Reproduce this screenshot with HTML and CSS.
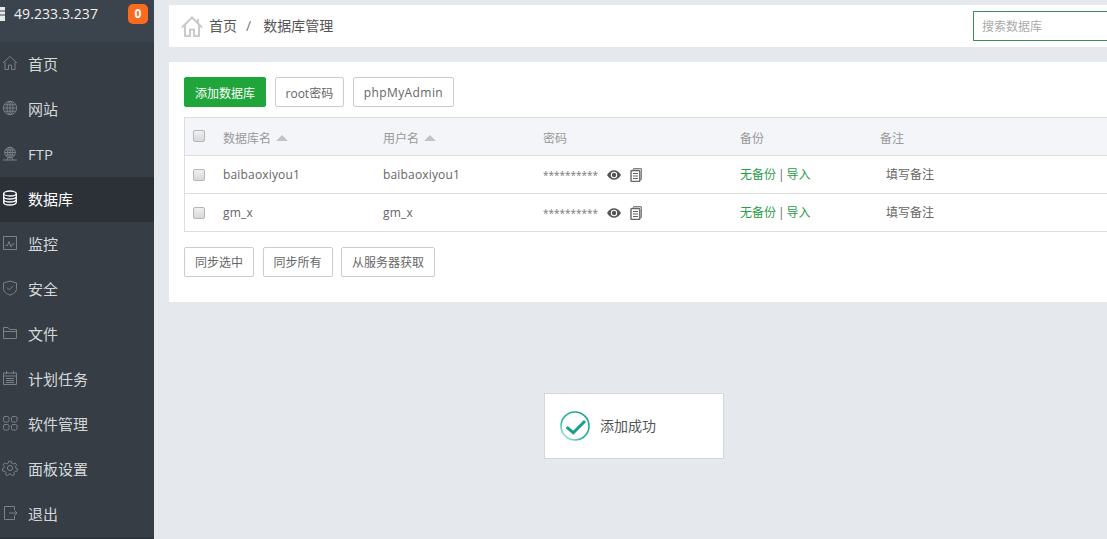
FILE: index.html
```html
<!DOCTYPE html>
<html lang="zh-CN">
<head>
<meta charset="utf-8">
<title>数据库管理</title>
<link rel="stylesheet" href="styles.css">
</head>
<body>
<div class="app">
  <aside class="sidebar">
    <div class="server">
      <svg class="server-icon" width="6" height="14" viewBox="0 0 6 14"><path d="M0 0h5v14H0z" fill="#e8eaec"/><path d="M0 4h5M0 8h5" stroke="#3b434c" stroke-width="1.2"/></svg>
      <span class="ip">49.233.3.237</span>
      <span class="badge">0</span>
    </div>
    <nav class="menu">
      <a class="item"><svg class="ico" viewBox="0 0 16 16"><path d="M1 8l7-6.500L15 8M3 7v7.500h3.500V10h3v4.500H13V7"/></svg>首页</a>
      <a class="item"><svg class="ico" viewBox="0 0 16 16"><circle cx="8" cy="8" r="6.700"/><ellipse cx="8" cy="8" rx="3" ry="6.700"/><path d="M1.300 8h13.400M2.200 4.800h11.600M2.200 11.200h11.600M8 1.300v13.400"/></svg>网站</a>
      <a class="item item-latin"><svg class="ico" viewBox="0 0 16 16"><circle cx="8" cy="6.500" r="5.300"/><ellipse cx="8" cy="6.500" rx="2.400" ry="5.300"/><path d="M2.700 6.500h10.600M3.500 4h9M3.500 9h9M8 1.200v10.600M1 14h14M5 14l1-2M11 14l-1-2"/></svg>FTP</a>
      <a class="item active"><svg class="ico" viewBox="0 0 16 16"><ellipse cx="8" cy="3.500" rx="6.300" ry="2.500"/><path d="M1.700 3.500v9c0 1.400 2.800 2.500 6.300 2.500s6.300-1.100 6.300-2.500v-9M1.700 6.500c0 1.400 2.800 2.500 6.300 2.500s6.300-1.100 6.300-2.500M1.700 9.500c0 1.400 2.800 2.500 6.300 2.500s6.300-1.100 6.300-2.500"/></svg>数据库</a>
      <a class="item"><svg class="ico" viewBox="0 0 16 16"><path d="M1.500 1.500h13v13h-13zM3.500 10.500h2l1.500-4 2 5.500 1.500-3h2"/></svg>监控</a>
      <a class="item"><svg class="ico" viewBox="0 0 16 16"><path d="M8 1l6.500 2v5.500c0 3.500-3 5.500-6.500 6.500-3.500-1-6.500-3-6.500-6.500V3zM5 7.500l2.300 2.300L11.200 6"/></svg>安全</a>
      <a class="item"><svg class="ico" viewBox="0 0 16 16"><path d="M1.500 13.500v-11h4.500l1.500 2h7v9zM1.500 6.500h13"/></svg>文件</a>
      <a class="item"><svg class="ico" viewBox="0 0 16 16"><path d="M1.500 3h13v11.500h-13zM1.500 6h13M4.500 1v3M11.500 1v3M4 8.500h8M4 10.500h8M4 12.500h8"/></svg>计划任务</a>
      <a class="item"><svg class="ico" viewBox="0 0 16 16"><rect x="1.500" y="1.500" width="5.500" height="5.500" rx="1.500"/><rect x="9.500" y="1.500" width="5.500" height="5.500" rx="1.500"/><rect x="1.500" y="9.500" width="5.500" height="5.500" rx="1.500"/><rect x="9.500" y="9.500" width="5.500" height="5.500" rx="1.500"/></svg>软件管理</a>
      <a class="item"><svg class="ico" viewBox="0 0 16 16"><path d="M6.800 1.200h2.400l.4 2 1.700.8 1.900-1 1.500 1.900-1.300 1.500.4 1.600 1.800.9-.5 2.300-2 .1-1.200 1.400.4 2-2.200 1-1.200-1.600H7l-1.200 1.600-2.200-1 .4-2L2.800 11.200l-2-.1-.5-2.300 1.800-.9.400-1.600L1.200 4.800l1.500-1.900 1.900 1 1.700-.8z"/><circle cx="8" cy="8" r="2.600"/></svg>面板设置</a>
      <a class="item"><svg class="ico" viewBox="0 0 16 16"><path d="M12.500 5V1.500h-10v13h10V11M7 8h8M12.500 5.500L15 8l-2.500 2.500"/></svg>退出</a>
    </nav>
  </aside>
  <main class="main">
    <header class="crumbs">
      <svg class="home" width="22" height="21" viewBox="0 0 22 21"><path d="M1 11.500L11 1.500l10 10M17 3v4.500M4 9.500V20h5v-6.500h4V20h5V9.500"/></svg>
      <span class="crumb">首页</span>
      <span class="sep">/</span>
      <span class="crumb">数据库管理</span>
      <input class="search" type="text" placeholder="搜索数据库">
    </header>
    <section class="card">
      <div class="toolbar">
        <button class="btn primary">添加数据库</button>
        <button class="btn">root密码</button>
        <button class="btn wide">phpMyAdmin</button>
      </div>
      <div class="table">
        <div class="row head">
          <span class="c-check"><span class="box"></span></span>
          <span class="c-name">数据库名<i class="tri"></i></span>
          <span class="c-user">用户名<i class="tri"></i></span>
          <span class="c-pass">密码</span>
          <span class="c-backup">备份</span>
          <span class="c-note">备注</span>
        </div>
        <div class="row">
          <span class="c-check"><span class="box"></span></span>
          <span class="c-name latin">baibaoxiyou1</span>
          <span class="c-user latin">baibaoxiyou1</span>
          <span class="c-pass"><span class="stars">**********</span>
            <svg class="eye" width="14" height="10" viewBox="0 0 14 10"><path d="M0 5c1.800-3.200 4.200-4.800 7-4.800s5.200 1.600 7 4.800c-1.800 3.200-4.200 4.800-7 4.800S1.800 8.200 0 5z" fill="#555"/><circle cx="7" cy="5" r="3.200" fill="#fff"/><circle cx="7" cy="5" r="2.200" fill="#555"/></svg>
            <svg class="copy" width="12" height="14" viewBox="0 0 12 14"><path d="M3.500 1.500V.7h7.800v10.800h-1" fill="none" stroke="#666"/><rect x="1" y="2.500" width="8.800" height="11" rx="1" fill="#fff" stroke="#666" stroke-width="1.400"/><path d="M3 5.500h5M3 8h5M3 10.500h5" stroke="#666"/></svg>
          </span>
          <span class="c-backup raised"><a class="link">无备份</a><span class="pipe">|</span><a class="link">导入</a></span>
          <span class="c-note note raised">填写备注</span>
        </div>
        <div class="row">
          <span class="c-check"><span class="box"></span></span>
          <span class="c-name latin">gm_x</span>
          <span class="c-user latin">gm_x</span>
          <span class="c-pass"><span class="stars">**********</span>
            <svg class="eye" width="14" height="10" viewBox="0 0 14 10"><path d="M0 5c1.800-3.200 4.200-4.800 7-4.800s5.200 1.600 7 4.800c-1.800 3.200-4.200 4.800-7 4.800S1.800 8.200 0 5z" fill="#555"/><circle cx="7" cy="5" r="3.200" fill="#fff"/><circle cx="7" cy="5" r="2.200" fill="#555"/></svg>
            <svg class="copy" width="12" height="14" viewBox="0 0 12 14"><path d="M3.500 1.500V.7h7.800v10.800h-1" fill="none" stroke="#666"/><rect x="1" y="2.500" width="8.800" height="11" rx="1" fill="#fff" stroke="#666" stroke-width="1.400"/><path d="M3 5.500h5M3 8h5M3 10.500h5" stroke="#666"/></svg>
          </span>
          <span class="c-backup raised"><a class="link">无备份</a><span class="pipe">|</span><a class="link">导入</a></span>
          <span class="c-note note raised">填写备注</span>
        </div>
      </div>
      <div class="actions">
        <button class="btn">同步选中</button>
        <button class="btn">同步所有</button>
        <button class="btn">从服务器获取</button>
      </div>
    </section>
  </main>
</div>
<div class="toast">
  <svg width="30" height="30" viewBox="0 0 30 30"><defs><linearGradient id="ring" x1="1" y1="0" x2="0" y2="1"><stop offset="0" stop-color="#16a085"/><stop offset=".65" stop-color="#2bb8a0"/><stop offset="1" stop-color="#d8f2ec"/></linearGradient></defs><circle cx="15" cy="15" r="14" fill="none" stroke="url(#ring)" stroke-width="1.600"/><path d="M6.700 16.200l6.600 5.500L25 10" fill="none" stroke="#16a085" stroke-width="3"/></svg>
  <span class="toast-text">添加成功</span>
</div>
</body>
</html>
```
FILE: styles.css
```css
* { box-sizing: border-box; }
html, body { margin: 0; height: 100%; overflow: hidden; }
body {
  background: #e5e8ec;
  font-family: "Open Sans", "Noto Sans CJK SC", sans-serif;
  font-size: 12px;
  color: #666;
}
.app { display: flex; height: 539px; width: 1107px; overflow: hidden; }
.sidebar { flex: 0 0 154px; background: #2f353c; display: flex; flex-direction: column; }
.server {
  height: 42px;
  background: #3b434c;
  display: flex;
  align-items: center;
  padding: 0 6px 14px 0;
  color: #f0f1f2;
}
.server-icon { margin-right: 8px; }
.ip { font-size: 14px; flex: 1; letter-spacing: .08px; padding-bottom: 1px; }
.badge {
  width: 20px;
  height: 20px;
  border-radius: 5px;
  background: #f96b1f;
  color: #fff;
  font-weight: 700;
  font-size: 12px;
  text-align: center;
  line-height: 20px;
}
.menu { display: flex; flex-direction: column; }
.item {
  height: 45px;
  display: flex;
  align-items: center;
  gap: 10px;
  padding: 0 0 3px 2px;
  font-size: 15px;
  color: #d5d8da;
  background: #363d45;
}
.item-latin { padding-bottom: 1px; }
.item.active { background: #2c3138; color: #fff; }
.ico { width: 16px; height: 16px; fill: none; stroke: #7b8187; stroke-width: 1; }
.item.active .ico { stroke: #fff; stroke-width: 1.300; }
.main { flex: 1; min-width: 0; padding: 5px 0 0 15px; }
.crumbs {
  height: 42px;
  background: #fff;
  display: flex;
  align-items: center;
  padding-left: 12px;
  font-size: 14px;
  color: #555;
}
.crumb { padding-bottom: 2px; }
.home { fill: none; stroke: #c8cacc; stroke-width: 2; margin-right: 6px; }
.sep { margin: 0 12px 2px 9px; color: #777; }
.search {
  margin-left: auto;
  width: 140px;
  height: 30px;
  margin-right: -6px;
  border: 1px solid #3c8f5c;
  outline: none;
  padding: 0 8px;
  font: 12px "Open Sans", "Noto Sans CJK SC", sans-serif;
}
.search::placeholder { color: #aaa; }
.card { margin-top: 15px; height: 240px; background: #fff; padding: 15px 0 0 15px; }
.toolbar { display: flex; gap: 8.5px; height: 30px; }
.btn {
  height: 30px;
  padding: 0 10px;
  background: #fff;
  border: 1px solid #ccc;
  border-radius: 2px;
  color: #666;
  font: 12px "Open Sans", "Noto Sans CJK SC", sans-serif;
  white-space: nowrap;
}
.toolbar .btn { padding-top: 1px; }
.btn.primary { background: #20a53a; border-color: #20a53a; color: #fff; }
.btn.wide { letter-spacing: .42px; }
.latin { letter-spacing: .17px; }
.table {
  margin-top: 10px;
  border: solid #ddd;
  border-width: 1px 0 0 1px;
  width: 960px;
}
.row {
  display: flex;
  align-items: center;
  height: 38px;
  border-bottom: 1px solid #ddd;
}
.head { background: #f3f5f8; color: #999; }
.head > span:not(.c-check) { padding-top: 2px; }
.head .box { margin-top: -2px; }
.row > span { white-space: nowrap; }
.c-check { width: 38px; padding-left: 8px; display: flex; }
.box {
  width: 12px;
  height: 12px;
  border: 1px solid #b5b5b5;
  border-radius: 2px;
  background: linear-gradient(#f0f0f0, #d8d8d8);
}
.c-name, .c-user { width: 160px; }
.c-pass { width: 197px; display: flex; align-items: center; }
.c-backup { width: 140px; }
.raised { padding-bottom: 2px; }
.tri {
  display: inline-block;
  margin-left: 5px;
  vertical-align: 2px;
  border: 6px solid transparent;
  border-top: 0;
  border-bottom: 6px solid #c0c4c8;
}
.stars { color: #777; font-size: 10px; }
.eye { margin-left: 9px; }
.copy { margin-left: 9px; }
.link { color: #2a9d4a; }
.pipe { margin: 0 2px; color: #666; }
.note { padding-left: 6px; color: #666; }
.actions { display: flex; gap: 8.5px; margin-top: 15px; }
.toast {
  position: absolute;
  left: 544px;
  top: 393px;
  width: 180px;
  height: 66px;
  background: #fff;
  border: 1px solid #d3d6da;
  display: flex;
  align-items: center;
  padding-left: 15px;
  gap: 10px;
  color: #555;
  font-size: 14px;
}
.toast-text { padding-bottom: 2px; }
```
